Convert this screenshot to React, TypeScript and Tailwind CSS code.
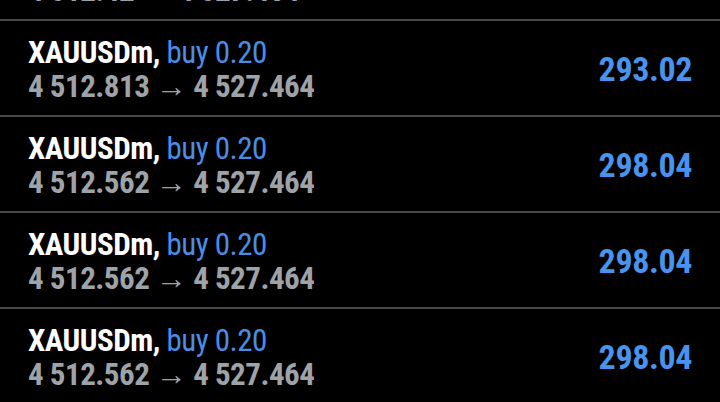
import React from "react";

type Deal = {
  symbol: string;
  side: string;
  volume: string;
  open: string;
  close: string;
  profit: string;
};

const deals: Deal[] = [
  { symbol: "XAUUSDm", side: "buy", volume: "0.20", open: "4 512.42", close: "4 527.464", profit: "293.02" },
  { symbol: "XAUUSDm", side: "buy", volume: "0.20", open: "4 512.813", close: "4 527.464", profit: "293.02" },
  { symbol: "XAUUSDm", side: "buy", volume: "0.20", open: "4 512.562", close: "4 527.464", profit: "298.04" },
  { symbol: "XAUUSDm", side: "buy", volume: "0.20", open: "4 512.562", close: "4 527.464", profit: "298.04" },
  { symbol: "XAUUSDm", side: "buy", volume: "0.20", open: "4 512.562", close: "4 527.464", profit: "298.04" },
];

export default function App() {
  return (
    <div
      className="w-[720px] h-[402px] overflow-hidden bg-black"
      style={{ fontFamily: '"Roboto Condensed", Roboto, sans-serif' }}
    >
      {/* list is scrolled: first deal only shows its last pixels */}
      <div className="-mt-[75px] flex flex-col">
        {deals.map((d, i) => (
          <div
            key={i}
            className="h-[96px] flex items-center justify-between pl-[28px] pr-[28px] border-b-2 border-[#48484c]"
          >
            <div className="flex flex-col leading-[34px] pt-[3px]">
              <p className="text-[31px] font-bold text-white tracking-[-0.5px]">
                {d.symbol},{" "}
                <span className="font-normal text-[#4a8ee4]">
                  {d.side} {d.volume}
                </span>
              </p>
              <p className="text-[31px] font-bold text-[#9fa3a8] tracking-[-0.5px]">
                {d.open} → {d.close}
              </p>
            </div>
            <p className="text-[34px] font-bold text-[#4a93ec] tracking-[-0.4px] pt-[2px]">
              {d.profit}
            </p>
          </div>
        ))}
      </div>
    </div>
  );
}
